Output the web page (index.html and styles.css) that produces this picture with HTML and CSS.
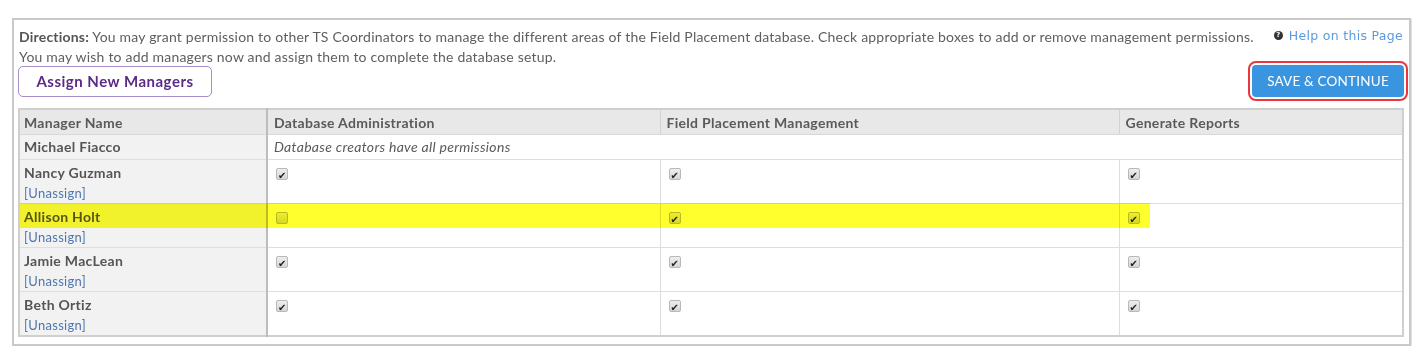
FILE: index.html
```html
<!DOCTYPE html>
<html lang="en">
<head>
<meta charset="UTF-8" />
<title>Assign Managers</title>
<link rel="stylesheet" href="styles.css">
</head>
<body>
<div class="panel">
  <div class="top">
    <p class="directions"><b>Directions:</b> You may grant permission to other TS Coordinators to manage the different areas of the Field Placement database. Check appropriate boxes to add or remove management permissions.<br>You may wish to add managers now and assign them to complete the database setup.</p>
    <a class="help" href="#"><span class="help-icon">?</span>Help on this Page</a>
  </div>

  <div class="actions">
    <button class="btn-assign" type="button">Assign New Managers</button>
    <button class="btn-save" type="button">SAVE &amp; CONTINUE</button>
  </div>

  <div class="table-wrap">
    <table class="managers">
      <colgroup>
        <col class="c-name"><col class="c-db"><col class="c-field"><col>
      </colgroup>
      <thead>
        <tr>
          <th>Manager Name</th>
          <th>Database Administration</th>
          <th>Field Placement Management</th>
          <th>Generate Reports</th>
        </tr>
      </thead>
      <tbody>
        <tr class="short">
          <td class="name">Michael Fiacco</td>
          <td colspan="3" class="note">Database creators have all permissions</td>
        </tr>
        <tr>
          <td class="name">Nancy Guzman<br><a href="#">[Unassign]</a></td>
          <td><span class="box checked"></span></td>
          <td><span class="box checked"></span></td>
          <td><span class="box checked"></span></td>
        </tr>
        <tr>
          <td class="name">Allison Holt<br><a href="#">[Unassign]</a></td>
          <td><span class="box"></span></td>
          <td><span class="box checked"></span></td>
          <td><span class="box checked"></span></td>
        </tr>
        <tr>
          <td class="name">Jamie MacLean<br><a href="#">[Unassign]</a></td>
          <td><span class="box checked"></span></td>
          <td><span class="box checked"></span></td>
          <td><span class="box checked"></span></td>
        </tr>
        <tr>
          <td class="name">Beth Ortiz<br><a href="#">[Unassign]</a></td>
          <td><span class="box checked"></span></td>
          <td><span class="box checked"></span></td>
          <td><span class="box checked"></span></td>
        </tr>
      </tbody>
    </table>
    <div class="highlight"></div>
  </div>
</div>
</body>
</html>
```

FILE: styles.css
```css
body { margin: 0; padding: 18px 0 0 12px; background: #fff; font-family: Lato, "Open Sans", sans-serif; color: #555; }

.panel {
  width: 1386px; height: 317px; border: 2px solid #c9c9c9; box-shadow: 1px 1px 0 #e2e2e2;
  padding: 7px 5px 0 4px;
}

.top { display: flex; justify-content: space-between; align-items: flex-start; }
.directions { margin: 0 0 0 1px; font-size: 14px; line-height: 20px; letter-spacing: 0.2px; color: #5e5e5e; }
.directions b { color: #555; }
.help {
  display: flex; align-items: center; margin-top: 1px; margin-right: 1px;
  font-family: "DejaVu Sans", Verdana, sans-serif; font-size: 12.5px; color: #5a9be0; text-decoration: none; letter-spacing: 0.3px;
}
.help-icon {
  width: 9px; height: 9px; border-radius: 50%; background: #333; color: #fff;
  font-size: 7px; line-height: 9px; text-align: center; font-weight: bold; margin-right: 6px;
}

.actions { display: flex; justify-content: space-between; align-items: center; margin-top: -2px; height: 32px; }
.btn-assign {
  height: 31px; width: 194px; border: 1px solid #a88bc9; border-radius: 5px; background: #fff;
  font-family: Lato, sans-serif; font-size: 15px; font-weight: bold; color: #5b2a86; letter-spacing: 0.5px; cursor: pointer;
}
.btn-save {
  height: 32px; width: 152px; border: none; border-radius: 4px; background: #3a95e0; color: #fff;
  font-family: Lato, sans-serif; font-size: 13.5px; letter-spacing: 0.2px; cursor: pointer;
  outline: 2px solid #e8383d; outline-offset: 2px;
}

.table-wrap { position: relative; margin-top: 11px; }
.managers { width: 100%; border-collapse: collapse; border: 2px solid #cfcfcf; font-size: 14px; letter-spacing: 0.3px; table-layout: fixed; }
.c-name { width: 248px; }
.c-db { width: 393px; }
.c-field { width: 459px; }
.managers th {
  background: #e8e8e8; text-align: left; font-weight: bold; color: #5a5a5a; height: 24px; padding: 0 6px;
  border-right: 1px solid #d2d2d2; border-bottom: 1px solid #d8d8d8;
}
.managers th:first-child { border-right: 2px solid #bdbdbd; padding-left: 4px; }
.managers td {
  vertical-align: top; padding: 3px 8px 0; height: 40px; border-top: 1px solid #dedede; border-right: 1px solid #dedede;
  line-height: 20px;
}
.managers tr.short td { height: 22px; padding-top: 2px; }
.managers td.name { background: #f2f2f2; font-weight: bold; color: #555; padding-left: 4px; border-right: 2px solid #bdbdbd; }
.managers td.name a { font-weight: normal; font-size: 13px; color: #4d77b0; text-decoration: none; }
.managers td.note { font-style: italic; color: #5a5a5a; padding-left: 6px; }

.box {
  display: inline-block; width: 10px; height: 10px; margin-top: 5px; border: 1px solid #b9b9b9; border-radius: 2px;
  background: linear-gradient(#eee, #d6d6d6); position: relative; vertical-align: top;
}
.box.checked::after {
  content: "\2714"; position: absolute; left: 1px; top: -3px; font-size: 10px; color: #222; font-family: "DejaVu Sans", sans-serif;
}

.highlight {
  position: absolute; left: 2px; top: 95px; width: 1130px; height: 25px;
  background: #ffff2e; mix-blend-mode: multiply; pointer-events: none;
}
```
